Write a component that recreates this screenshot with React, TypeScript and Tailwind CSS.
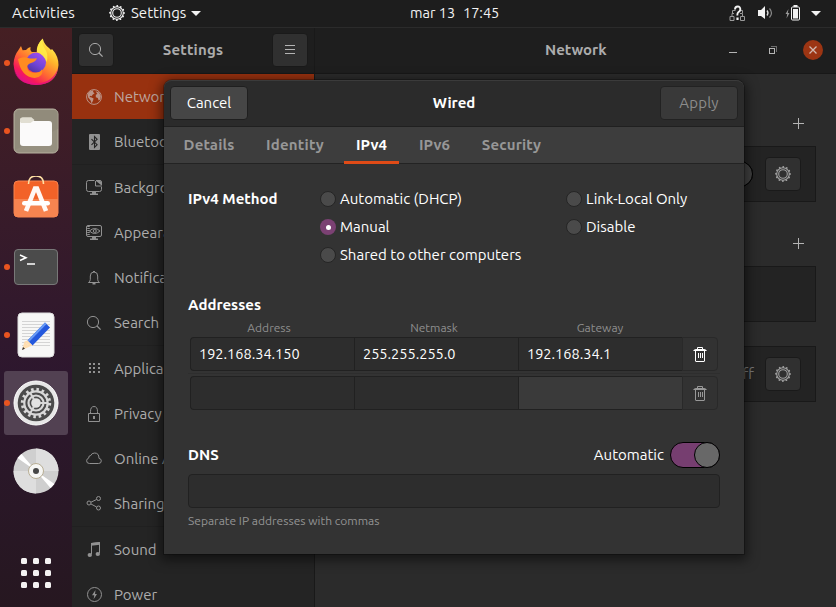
import type { ReactNode } from "react";

function Gear({ className }: { className?: string }) {
  return (
    <svg viewBox="0 0 16 16" className={className} fill="none" stroke="currentColor">
      <circle cx="8" cy="8" r="6.3" strokeWidth="1.1" />
      <circle cx="8" cy="8" r="4.3" strokeWidth="1.1" />
      <circle cx="8" cy="8" r="7" strokeWidth="1.8" strokeLinecap="round" strokeDasharray="0.1 3.565" />
    </svg>
  );
}

function SearchIcon() {
  return (
    <svg viewBox="0 0 16 16" className="size-4" fill="none" stroke="currentColor">
      <circle cx="7" cy="7" r="5.6" />
      <path d="M11 11l3.6 3.6" strokeWidth="1.3" />
    </svg>
  );
}

function Plus() {
  return (
    <svg viewBox="0 0 12 12" className="mr-[11px] size-3 self-end" shapeRendering="crispEdges">
      <path d="M5 0h1v11h-1zM0 5h11v1H0z" fill="#b4b4b4" />
    </svg>
  );
}

function Trash({ className }: { className: string }) {
  return (
    <svg viewBox="0 0 14 17" className={`mr-px h-[17px] w-[14px] ${className}`} fill="none" stroke="currentColor">
      <path d="M4.5 3V1.5h5V3M2.5 5v10q0 .5.5.5h8q.5 0 .5-.5V5M5.5 7v5M7.5 7v5M9.5 7v5" />
      <path d="M.5 4.6Q1 3.2 3 3h8q2 .2 2.5 1.6z" fill="currentColor" stroke="none" />
      <path d="M.5 4.5h13" />
    </svg>
  );
}

const line = { viewBox: "0 0 16 16", className: "size-4", fill: "none", stroke: "currentColor" };

const sidebarIcons: Record<string, ReactNode> = {
  Network: (
    <svg {...line}>
      <circle cx="8" cy="8" r="7.4" strokeWidth="1" />
      <path
        d="M2 4.5 4 2.2 7.5 1.3 7 3 8.6 4.2 6.6 5.8 5.6 7.2 4 6.8 3.6 8 5.6 8.6 7.6 9.6 7 11.8 5.6 14.4 4.6 11.4 2 8.2zM9.6 2.2 13 3.4 14.8 7 14.2 10.6 12.6 11.6 11.8 9 9.8 8.2 9.8 5.8 11.4 5z"
        fill="currentColor"
        stroke="none"
      />
    </svg>
  ),
  Bluetooth: (
    <svg {...line}>
      <rect x="3" y="0" width="11" height="16" rx="1" fill="currentColor" stroke="none" />
      <path d="M5.500 5.200l5.600 5.500-2.600 2.600V2.700l2.600 2.600-5.600 5.500" stroke="#242424" strokeWidth="1.1" />
    </svg>
  ),
  Background: (
    <svg {...line}>
      <path d="M8.5.5h-6q-2 0-2 2v7q0 2 2 2h11q2 0 2-2v-3" />
      <path d="M10 .5h4q1.500 0 1.500 1.500v3.500M9.500 1v5h5.500" />
      <path d="M10 1h4q1 0 1 1v3z" fill="currentColor" stroke="none" />
      <path d="M6 12h4v1.500h2V15H4v-1.500h2z" fill="currentColor" stroke="none" />
    </svg>
  ),
  Appearance: (
    <svg {...line}>
      <rect x=".5" y=".5" width="15" height="11" rx="1.5" />
      <path d="M2.500 1v10" strokeDasharray="1 1" strokeWidth="2.500" />
      <path d="M3.500 6q5-5 10.500 0-5.500 5-10.500 0z" />
      <circle cx="8.800" cy="6" r="1.500" />
      <path d="M6 12h4v1.500h2V15H4v-1.500h2z" fill="currentColor" stroke="none" />
    </svg>
  ),
  Notifications: (
    <svg {...line}>
      <path d="M2.500 12.500q1.800-1 1.800-3V6q0-4 3.700-4t3.700 4v3.500q0 2 1.800 3zM7 1.500h2" />
      <path d="M6.500 13h3v1.500h-3z" fill="currentColor" stroke="none" />
    </svg>
  ),
  Search: <SearchIcon />,
  Applications: (
    <svg {...line} shapeRendering="crispEdges">
      <path d="M3 2h2v2H3zM7 2h2v2H7zM12 2h2v2h-2zM3 6h2v2H3zM7 6h2v2H7zM12 6h2v2h-2zM3 10h2v2H3zM7 10h2v2H7zM12 10h2v2h-2z" fill="currentColor" stroke="none" />
    </svg>
  ),
  Privacy: (
    <svg {...line}>
      <path d="M2.500 6.500h11v8h-11zM4.500 6.500V4.500Q4.500-.5 8-.5t3.500 5v2" className="translate-y-px" />
      <path d="M7 10h2v3H7z" fill="currentColor" stroke="none" />
    </svg>
  ),
  "Online Accounts": (
    <svg {...line}>
      <path d="M3.500 12.500h9q2.800 0 2.800-2.600 0-2.200-2.300-2.500Q13 2 8.700 2 5.600 2 4.800 4.500 2.800 4.200 2.600 7.200.6 7.800.6 9.800q0 2.700 2.900 2.700z" />
    </svg>
  ),
  Sharing: (
    <svg {...line}>
      <circle cx="3" cy="7" r="2" />
      <circle cx="12.500" cy="2.500" r="2" />
      <circle cx="12.500" cy="12" r="2" />
      <path d="M5 6.200l5.600-2.700M5 8l5.600 3" />
    </svg>
  ),
  Sound: (
    <svg {...line}>
      <path d="M5.500 12V1.500l8-1v10.500" />
      <path d="M5 1l9-1v2.800l-9 1z" fill="currentColor" stroke="none" />
      <ellipse cx="3.800" cy="13" rx="2.200" ry="1.900" fill="currentColor" stroke="none" />
      <ellipse cx="11.800" cy="12" rx="2.200" ry="1.900" fill="currentColor" stroke="none" />
    </svg>
  ),
  Power: (
    <svg {...line}>
      <circle cx="8.500" cy="7.500" r="7" />
      <path d="M9.500 3 6 8.200h2.300L7.600 12.200 11 7H9z" fill="currentColor" stroke="none" />
    </svg>
  ),
};

const groups = [
  ["Network", "Bluetooth"],
  ["Background", "Appearance", "Notifications", "Search"],
  ["Applications", "Privacy", "Online Accounts", "Sharing"],
  ["Sound", "Power"],
];

function TopBar() {
  return (
    <header className="flex h-7 shrink-0 items-center border-b border-[#2b2b2b] bg-[#1d1d1d] pb-px text-[#f2f2f2]">
      <div className="w-[109px] pl-3 tracking-[0.150px]">Activities</div>
      <Gear className="size-4" />
      <span className="ml-[6px] w-[56px]">Settings</span>
      <svg viewBox="0 0 10 5" className="ml-[4px] h-[5px] w-[10px]"><path d="M0 0h10L5 5z" fill="currentColor" /></svg>
      <div className="ml-[209px] flex whitespace-pre text-[14.500px]"><span className="w-[53px]">mar 13</span><span>17:45</span></div>
      <div className="mr-[15px] ml-auto flex items-center">
        <svg viewBox="0 0 17 17" className="h-[17px] w-[17px]" fill="none" stroke="#999">
          <path d="M1 11.500h4v4H1zM11.500 11.500h4v4h-4zM3 11V8.500h2M13.500 11V8.500H11M3.500 8V5.500h3M13.500 8V5.500H12" />
          <path d="M6 4.500Q6 1.500 8.700 1.500T11.300 4.500Q11.300 6 9.300 7.300 8.300 8 8.300 10.500" stroke="#f2f2f2" strokeWidth="1.900" />
          <path d="M7.400 12.500h2.200v2.500H7.400z" fill="#f2f2f2" stroke="none" />
        </svg>
        <svg viewBox="0 0 16 14" className="ml-[12px] h-[14px] w-4" fill="none">
          <path d="M0 4h3l4-4v13L3 10H0z" fill="#f2f2f2" />
          <path d="M9 4.500q2 2.500 0 5" stroke="#ddd" strokeWidth="1.300" />
          <path d="M11.500 2.500q4 4.500 0 9" stroke="#888" strokeWidth="1.200" />
        </svg>
        <svg viewBox="0 0 15 16" className="ml-[11px] h-4 w-[15px]">
          <path d="M3.500 4 .5 9h1.700L1.500 13.500 4.500 8H2.800z" fill="#999" />
          <path d="M8.500 0h4v2h-4z" fill="#f2f2f2" />
          <rect x="6.500" y="2" width="8" height="13" rx="1" fill="none" stroke="#f2f2f2" />
          <path d="M8 4h5v9.500H8z" fill="#f2f2f2" />
        </svg>
        <svg viewBox="0 0 10 5" className="ml-[11px] h-[5px] w-[10px]"><path d="M0 0h10L5 5z" fill="#f2f2f2" /></svg>
      </div>
    </header>
  );
}

function Firefox() {
  return (
    <svg viewBox="0 0 46 48" className="-mt-[2px] h-12 w-[46px]">
      <defs>
        <linearGradient id="ff-body" x1=".85" y1=".1" x2=".25" y2=".95">
          <stop offset="0" stopColor="#fff350" /><stop offset=".3" stopColor="#ffb72c" /><stop offset=".6" stopColor="#ff6a32" /><stop offset=".85" stopColor="#f7195a" /><stop offset="1" stopColor="#e0108a" />
        </linearGradient>
        <linearGradient id="ff-globe" x1=".8" y1="0" x2=".2" y2="1">
          <stop offset="0" stopColor="#a64cf0" /><stop offset=".55" stopColor="#7045d8" /><stop offset="1" stopColor="#4b329f" />
        </linearGradient>
      </defs>
      <path d="M5.500 12 8 8l1.600 4.200L13 12q2-2.400 4.500-3-.8 3 1.200 5h5q.3-8.200 6-13.500Q31.500 7 36 10l2 2 1-1q6.500 7 6.500 16Q44 46.500 23 47 2 46 .5 26 1 17.500 5.500 12z" fill="url(#ff-body)" />
      <path d="M.8 30Q4 45 23 45.500 40 45 45 30q-2.500 16.500-22 17Q3 46 .8 30z" fill="#e3107e" opacity=".8" />
      <circle cx="23" cy="24.500" r="10" fill="url(#ff-globe)" />
      <path d="M5 21q5-3 10-1 3 1 9 .3-1.500 3.600-6 4.600-2.500.7-3.600 2.800-1 5.300 4.800 6.800 7 1.500 10-3.500 1.500 8-7.500 9Q8 39 5 21z" fill="#ff8b20" />
      <path d="M29.500 1Q23 7 24 14q7 3 9.500 10Q36 17 31.800 10.500 28.500 6 29.500 1z" fill="#fff04a" opacity=".8" />
    </svg>
  );
}

const dockItems: { id: string; running?: boolean; active?: boolean; icon: ReactNode }[] = [
  { id: "firefox", running: true, icon: <Firefox /> },
  {
    id: "files", running: true, icon: (
      <svg viewBox="0 0 46 46" className="size-[46px]">
        <rect x="1" y="1" width="44" height="44" rx="5" fill="#969080" stroke="#b6b19f" />
        <path d="M5 2h36q4 0 4 4v15L2 42V6z" fill="#8c8676" opacity=".45" />
        <path d="M7 12q0-2.500 2.500-2.500h9l4 5H37v4H7z" fill="#e1ded2" />
        <rect x="7" y="13" width="32" height="25" rx="3" fill="#fbfafa" />
        <path d="M8 15h9.500l4-3-3-2.500H10Q7 9.500 7 12z" fill="#e1ded2" />
      </svg>
    ),
  },
  {
    id: "software", icon: (
      <svg viewBox="0 4 46 46" className="size-[46px]">
        <rect x="1" y="9" width="44" height="36" rx="4" fill="#f26228" stroke="#f7834f" />
        <path d="M1 27h44v14q0 4-4 4H5q-4 0-4-4z" fill="#f68450" />
        <path d="M15.500 12q0-8 7.500-8t7.500 8" fill="none" stroke="#ffe0a4" strokeWidth="1.600" />
        <path d="M13 39 22 16.500h2L33 39" fill="none" stroke="#fff" strokeWidth="4.600" opacity=".95" />
        <rect x="9" y="29" width="28" height="4.600" rx="2.300" fill="#fff" />
      </svg>
    ),
  },
  {
    id: "terminal", running: true, icon: (
      <svg viewBox="0 0 46 46" className="size-[46px]">
        <rect x="1.500" y="5.500" width="43" height="35" rx="3.500" fill="#4b4b4b" stroke="#787878" />
        <path d="M7 11l6 2.700-6 2.800" fill="none" stroke="#fff" strokeWidth="1.500" />
        <path d="M14 20h8" stroke="#fff" strokeWidth="1.500" />
      </svg>
    ),
  },
  {
    id: "editor", running: true, icon: (
      <svg viewBox="0 0 46 46" className="size-[46px]">
        <rect x="5" y="1" width="36" height="44" rx="4" fill="#f7f7f6" stroke="#dedede" />
        <path d="M9 9.500h28M9 12.500h28M9 15.500h28M9 18.500h28M9 21.500h28M9 24.500h28M9 27.500h28M9 30.500h28M9 33.500h28" stroke="#d4d4d4" />
        <path d="M9 38l2.500-8.500 5.500 5z" fill="#ffdeb0" /><path d="M9 38l1-3 2 1.800z" fill="#333" />
        <path d="M14.500 28.500 32 10.500l5 5L19.500 33.500z" fill="#2458dd" />
        <path d="M14.500 28.500 32 10.500l1.600 1.600L16 30z" fill="#689bf5" />
        <path d="M14.500 28.500l-3 1 5.500 5 2.500-1z" fill="#ffdeb0" />
      </svg>
    ),
  },
  {
    id: "settings", running: true, active: true, icon: (
      <svg viewBox="0 0 46 46" className="size-[46px]">
        <circle cx="23" cy="23" r="22" fill="#e7e7e7" stroke="#fff" />
        <circle cx="23" cy="23" r="18.300" fill="#4b4b4b" />
        <circle cx="23" cy="23" r="13.500" fill="none" stroke="#d8d8d8" strokeWidth="3.400" strokeDasharray="2.500 2.802" />
        <circle cx="23" cy="23" r="11.700" fill="none" stroke="#d8d8d8" strokeWidth="2.200" />
        <circle cx="23" cy="23" r="7.500" fill="none" stroke="#d8d8d8" strokeWidth="2.200" />
        <circle cx="23" cy="23" r="4.800" fill="#e2e2e2" />
        <path d="M27 23h8M21 26.500l-4 7M21 19.500l-4-7" stroke="#d8d8d8" strokeWidth="2" />
      </svg>
    ),
  },
  {
    id: "disc", icon: (
      <svg viewBox="0 0 46 46" className="size-[46px]">
        <circle cx="23" cy="23" r="22.500" fill="#cfcfcf" />
        <path d="M23 23V.5a22.500 22.500 0 0 1 22.500 22.500zM23 23v22.500A22.500 22.500 0 0 1 .5 23z" fill="#dedede" />
        <path d="M23 23 4.500 10l4-4zM23 23 41.500 36l-4 4z" fill="#fff" />
        <circle cx="23" cy="23" r="7.500" fill="#f6f6f4" stroke="#b8ae94" />
        <circle cx="23" cy="23" r="3" fill="#474747" />
      </svg>
    ),
  },
];

function Dock() {
  return (
    <nav className="flex w-[72px] shrink-0 flex-col items-center gap-1 bg-linear-to-b from-[#451f23] via-[#2d172e] via-60% to-[#261720] pt-[3px] pb-[2px]">
      {dockItems.map((item) => (
        <div key={item.id} className={`relative flex size-16 items-center justify-center rounded-[3px] ${item.active ? "bg-[#524152]" : ""}`}>
          {item.running && <i className="absolute top-[29px] left-0 size-[6px] rounded-full bg-[#e95420]" />}
          {item.icon}
        </div>
      ))}
      <div className="mt-auto grid size-16 grid-cols-3 content-center justify-center gap-[6px] px-[17px]">
        {Array.from({ length: 9 }, (_, i) => <i key={i} className="size-[6px] rounded-[1.500px] bg-[#f4f2f2]" />)}
      </div>
    </nav>
  );
}

function Sidebar() {
  return (
    <aside className="flex w-[243px] shrink-0 flex-col border-r border-[#191919] bg-[#242424]">
      <div className="flex h-[46px] shrink-0 items-center justify-between border-b border-[#181818] bg-[#1e1e1e] px-[6px] pb-[2px]">
        <div className="flex h-[34px] w-9 items-center justify-center rounded border border-[#1a1a1a] bg-[#303030] text-[#a8a8a8]"><SearchIcon /></div>
        <b className="tracking-[0.200px] text-[#acacac]">Settings</b>
        <div className="flex h-[34px] w-9 flex-col items-center justify-center gap-[3px] rounded border border-[#1a1a1a] bg-[#303030]">
          <i className="h-px w-[10px] bg-[#b4b4b4]" /><i className="h-px w-[10px] bg-[#b4b4b4]" /><i className="h-px w-[10px] bg-[#b4b4b4]" />
        </div>
      </div>
      {groups.map((group, g) => (
        <div key={group[0]} className={g > 0 ? "border-t border-[#202020]" : ""}>
          {group.map((name) => (
            <div key={name} className={`flex h-[45px] items-center gap-3 pl-[14px] ${name === "Network" ? "bg-[#98310f] text-[#bc9488]" : "text-[#919191]"}`}>
              {sidebarIcons[name]}
              <span className={`whitespace-nowrap ${name === "Network" ? "text-[#bea79f]" : "text-[#adadad]"}`}>{name}</span>
            </div>
          ))}
        </div>
      ))}
    </aside>
  );
}

function GearButton() {
  return (
    <div className="flex h-[34px] w-9 items-center justify-center rounded border border-[#1a1a1a] bg-[#303030] text-[#a0a0a0]">
      <Gear className="size-4" />
    </div>
  );
}

function NetworkPanel() {
  return (
    <main className="flex min-w-0 flex-1 flex-col bg-[#2b2b2b]">
      <div className="flex h-[46px] shrink-0 items-center border-b border-[#181818] bg-[#1e1e1e] pb-[2px]">
        <b className="ml-[230px] w-[62px] text-[#acacac]">Network</b>
        <div className="mr-[13px] ml-auto flex items-center">
          <i className="mt-[5px] h-px w-2 bg-[#b4b4b4]" />
          <svg viewBox="0 0 8 8" className="ml-8 size-2" shapeRendering="crispEdges" fill="none">
            <path d="M0 2h6v6H0zM1 3v4h4V3z" fill="#b4b4b4" fillRule="evenodd" /><path d="M2 0h6v6H7V1H2z" fill="#6c6c6c" />
          </svg>
          <div className="ml-[26px] flex size-5 items-center justify-center rounded-full bg-[#9c3513]">
            <svg viewBox="0 0 8 8" className="size-2"><path d="M.5.5l7 7m0-7l-7 7" stroke="#d2b9b1" strokeWidth="1.300" /></svg>
          </div>
        </div>
      </div>
      <div className="flex flex-col px-5 pt-11">
        <Plus />
        <div className="mt-4 flex h-[56px] items-center justify-end border border-[#191919] bg-[#232323] pr-[14px]">
          <div className="mr-[12px] flex h-[26px] w-[50px] rounded-full border border-black bg-[#303030]"><i className="-my-px -mr-px ml-auto h-[26px] w-[26px] rounded-full border border-black bg-[#404040]" /></div>
          <GearButton />
        </div>
        <div className="mt-9 flex flex-col"><Plus /></div>
        <div className="mt-4 h-[56px] border border-[#191919] bg-[#232323]" />
        <div className="mt-6 flex h-[56px] items-center justify-end border border-[#191919] bg-[#232323] pr-[14px]">
          <span className="mr-[11px] text-[#777]">Off</span>
          <GearButton />
        </div>
      </div>
    </main>
  );
}

function Radio({ label, checked }: { label: string; checked?: boolean }) {
  return (
    <div className="flex h-7 items-center gap-1">
      {checked ? (
        <i className="flex size-4 items-center justify-center rounded-full bg-[#7b4173]"><i className="size-[5px] rounded-full bg-white" /></i>
      ) : (
        <i className="size-4 rounded-full border border-[#252525] bg-[#4a4a4a]" />
      )}
      <span>{label}</span>
    </div>
  );
}

function AddressRow({ values, empty }: { values: string[]; empty?: boolean }) {
  return (
    <div className="flex h-[34px] w-[528px]">
      {values.map((value, i) => (
        <div key={i} className={`flex h-full w-[164px] items-center border-y border-l border-[#212121] pl-[8px] text-[14.500px] ${i === 0 ? "rounded-l" : ""} ${empty && i === 2 ? "bg-[#3a3a3a]" : "bg-[#2d2d2d]"}`}>{value}</div>
      ))}
      <div className="flex w-9 items-center justify-center rounded-r border border-[#292929] bg-[#323232]">
        <Trash className={empty ? "text-[#989898]" : "text-white"} />
      </div>
    </div>
  );
}

function WiredDialog() {
  return (
    <section className="absolute top-20 left-[164px] flex h-[474px] w-[580px] flex-col rounded-t-lg bg-[#333] text-white shadow-[0_3px_12px_3px_rgba(0,0,0,0.5),0_0_0_1px_rgba(0,0,0,0.25)]">
      <div className="flex h-[47px] shrink-0 items-center justify-between rounded-t-lg border-t border-b border-t-[#3b3b3b] border-b-[#202020] bg-[#2b2b2b] px-[6px] pb-[2px]">
        <div className="flex h-[34px] w-[78px] items-center justify-center rounded border border-[#1f1f1f] bg-[#464646]">Cancel</div>
        <b>Wired</b>
        <div className="flex h-[34px] w-[78px] items-center justify-center rounded border border-[#222] bg-[#393939] tracking-[0.200px] text-[#8c8c8c]">Apply</div>
      </div>
      <div className="flex h-[37px] shrink-0 items-stretch gap-2 border-b border-[#232323] bg-[#3d3d3d] px-2 font-bold text-[#979797]">
        <span className="flex w-[74px] items-center justify-center tracking-[0.150px]">Details</span>
        <span className="flex w-[82px] items-center justify-center tracking-[0.250px]">Identity</span>
        <span className="-mb-px flex w-[55px] items-center justify-center border-b-3 border-[#e04b17] pt-[2px] text-white">IPv4</span>
        <span className="flex w-[55px] items-center justify-center">IPv6</span>
        <span className="flex w-[83px] items-center justify-center tracking-[0.150px]">Security</span>
      </div>
      <div className="flex flex-col px-6 pt-[21px]">
        <div className="flex">
          <b className="w-[132px] leading-7">IPv4 Method</b>
          <div className="w-[246px]"><Radio label="Automatic (DHCP)" /><Radio label="Manual" checked /><Radio label="Shared to other computers" /></div>
          <div><Radio label="Link-Local Only" /><Radio label="Disable" /></div>
        </div>
        <b className="mt-[26px] leading-5">Addresses</b>
        <div className="mt-[4px] flex text-[12px] leading-[18px] text-[#8e8e8e]">
          <span className="w-[162px] text-center">Address</span><span className="w-[168px] text-center">Netmask</span><span className="w-[164px] text-center">Gateway</span>
        </div>
        <div className="flex flex-col pl-[2px]">
          <AddressRow values={["192.168.34.150", "255.255.255.0", "192.168.34.1"]} />
          <div className="mt-[2px] mb-[2px] -ml-[2px] h-px bg-[#2e2e2e]" />
          <AddressRow values={["", "", ""]} empty />
        </div>
        <div className="mt-8 flex h-[26px] items-center justify-between">
          <b>DNS</b>
          <div className="flex items-center gap-[6px]">
            <span>Automatic</span>
            <div className="flex h-[26px] w-[50px] justify-end rounded-full border border-black bg-[#763e70]"><i className="-my-px -mr-px h-[26px] w-[26px] rounded-full border border-black bg-[#686868]" /></div>
          </div>
        </div>
        <div className="mt-[6px] h-[34px] rounded border border-[#212121] bg-[#2d2d2d]" />
        <span className="mt-[4px] text-[12px] leading-[18px] text-[#939393]">Separate IP addresses with commas</span>
      </div>
    </section>
  );
}

export default function App() {
  return (
    <div className="relative flex h-[607px] w-[836px] flex-col overflow-hidden bg-[#242424] font-['Ubuntu','Noto_Sans',sans-serif] text-[15px] leading-5">
      <TopBar />
      <div className="flex min-h-0 flex-1">
        <Dock />
        <Sidebar />
        <NetworkPanel />
      </div>
      <WiredDialog />
    </div>
  );
}
